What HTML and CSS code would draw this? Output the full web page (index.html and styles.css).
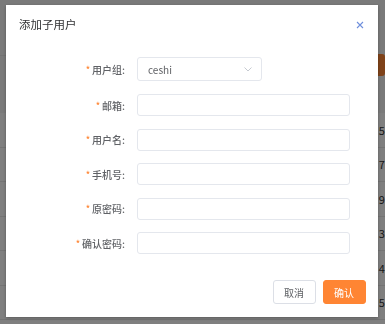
FILE: index.html
```html
<!DOCTYPE html>
<html lang="zh-CN">
<head>
    <meta charset="UTF-8">
    <meta name="viewport" content="width=device-width, initial-scale=1.0">
    <title>添加子用户</title>
    <link rel="stylesheet" href="styles.css">
</head>
<body>
    <div class="page">
        <div class="toolbar">
            <span class="toolbar-btn"></span>
        </div>
        <div class="table">
            <div class="row"><span>54</span></div>
            <div class="row"><span>76</span></div>
            <div class="row"><span>97</span></div>
            <div class="row"><span>33</span></div>
            <div class="row"><span>44</span></div>
            <div class="row"><span>55</span></div>
            <div class="row last"><em>a 11</em><span>33</span></div>
        </div>
    </div>

    <div class="mask">
        <div class="dialog">
            <div class="dialog-header">
                <span class="dialog-title">添加子用户</span>
                <svg class="dialog-close" width="8" height="8" viewBox="0 0 8 8">
                    <path d="M1 1L7 7M7 1L1 7" stroke="#6f8fdc" stroke-width="1.1" fill="none"/>
                </svg>
            </div>
            <form class="dialog-body" id="sub-user-form">
                <div class="form-item">
                    <label class="form-label"><i>*</i>用户组:</label>
                    <div class="select">
                        <span>ceshi</span>
                        <svg width="8" height="5" viewBox="0 0 8 5">
                            <path d="M0.5 0.5L4 4L7.5 0.5" stroke="#c0c4cc" stroke-width="0.9" fill="none"/>
                        </svg>
                    </div>
                </div>
                <div class="form-item">
                    <label class="form-label" for="email"><i>*</i>邮箱:</label>
                    <input type="text" id="email" class="input">
                </div>
                <div class="form-item">
                    <label class="form-label" for="username"><i>*</i>用户名:</label>
                    <input type="text" id="username" class="input">
                </div>
                <div class="form-item">
                    <label class="form-label" for="phone"><i>*</i>手机号:</label>
                    <input type="text" id="phone" class="input">
                </div>
                <div class="form-item">
                    <label class="form-label" for="password"><i>*</i>原密码:</label>
                    <input type="password" id="password" class="input">
                </div>
                <div class="form-item">
                    <label class="form-label" for="confirm"><i>*</i>确认密码:</label>
                    <input type="password" id="confirm" class="input">
                </div>
            </form>
            <div class="dialog-footer">
                <button type="button" class="btn">取消</button>
                <button type="button" class="btn btn-primary">确认</button>
            </div>
        </div>
    </div>
</body>
</html>
```

FILE: styles.css
```css
:root {
    --primary-color: #ff8533;
    --text-color: #303133;
    --label-color: #606266;
    --border-color: #e4e7ed;
}
body {
    margin: 0;
    font-family: "Noto Sans CJK SC", "Noto Sans", sans-serif;
    background: #f5f5f5;
    overflow: hidden;
}
.page {
    height: 324px;
    background: #f5f5f5;
    overflow: hidden;
}
.toolbar {
    height: 47px;
    border-bottom: 1px solid #e6e6e6;
    display: flex;
    justify-content: flex-end;
    padding-top: 55px;
    box-sizing: border-box;
}
.toolbar-btn {
    width: 40px;
    height: 22px;
    background: #ff8533;
    border-radius: 3px;
    margin-top: -1px;
}
.table {
    margin-top: 65px;
    background: #fff;
}
.row {
    height: 34.5px;
    border-bottom: 1px solid #e8e8e8;
    box-sizing: border-box;
    display: flex;
    align-items: center;
    justify-content: flex-end;
    font-size: 11px;
    color: #333;
    position: relative;
}
.row span {
    margin-right: -6px;
}
.row:first-child {
    margin-top: -8px;
}
.row.last {
    align-items: flex-start;
    padding-top: 12px;
}
.row em {
    font-style: normal;
    position: absolute;
    left: 72px;
    top: 14px;
}
.mask {
    position: fixed;
    inset: 0;
    background: rgba(0, 0, 0, 0.5);
    padding: 5px 7px 7px 6px;
}
.dialog {
    width: 372px;
    height: 312px;
    background: #fff;
    display: flex;
    flex-direction: column;
    box-shadow: 0 1px 3px rgba(0, 0, 0, 0.3);
}
.dialog-header {
    display: flex;
    justify-content: space-between;
    align-items: center;
    padding: 11px 14px 0 13px;
    height: 16px;
}
.dialog-title {
    font-size: 11.5px;
    color: var(--text-color);
    line-height: 16px;
}
.dialog-close {
    margin-top: 1px;
}
.dialog-body {
    padding: 25px 0 0;
    margin: 0;
    flex: 1;
}
.form-item {
    display: flex;
    align-items: center;
    margin-bottom: 12.5px;
}
.form-item:first-child {
    margin-bottom: 13px;
}
.form-label {
    width: 131px;
    padding-right: 12px;
    box-sizing: border-box;
    text-align: right;
    font-size: 10px;
    color: var(--label-color);
    font-weight: 500;
}
.form-label i {
    font-style: normal;
    color: var(--primary-color);
    font-size: 9px;
    margin-right: 2px;
    position: relative;
    top: -1px;
}
.input {
    width: 213px;
    height: 22px;
    border: 1px solid var(--border-color);
    border-radius: 3px;
    box-sizing: border-box;
    padding: 0 8px;
    font-size: 10px;
    outline: none;
}
.select {
    width: 125px;
    height: 24px;
    border: 1px solid var(--border-color);
    border-radius: 3px;
    box-sizing: border-box;
    display: flex;
    align-items: center;
    justify-content: space-between;
    padding: 0 9px 0 10px;
    font-size: 10px;
    color: var(--label-color);
}
.dialog-footer {
    display: flex;
    justify-content: flex-end;
    gap: 7px;
    padding: 0 12.5px 13px 0;
}
.btn {
    width: 43px;
    height: 24px;
    border: 1px solid #dcdfe6;
    border-radius: 3px;
    background: #fff;
    color: var(--label-color);
    font-family: inherit;
    font-size: 10px;
    padding: 0;
    cursor: pointer;
}
.btn-primary {
    background: var(--primary-color);
    border-color: var(--primary-color);
    color: #fff;
}
```
